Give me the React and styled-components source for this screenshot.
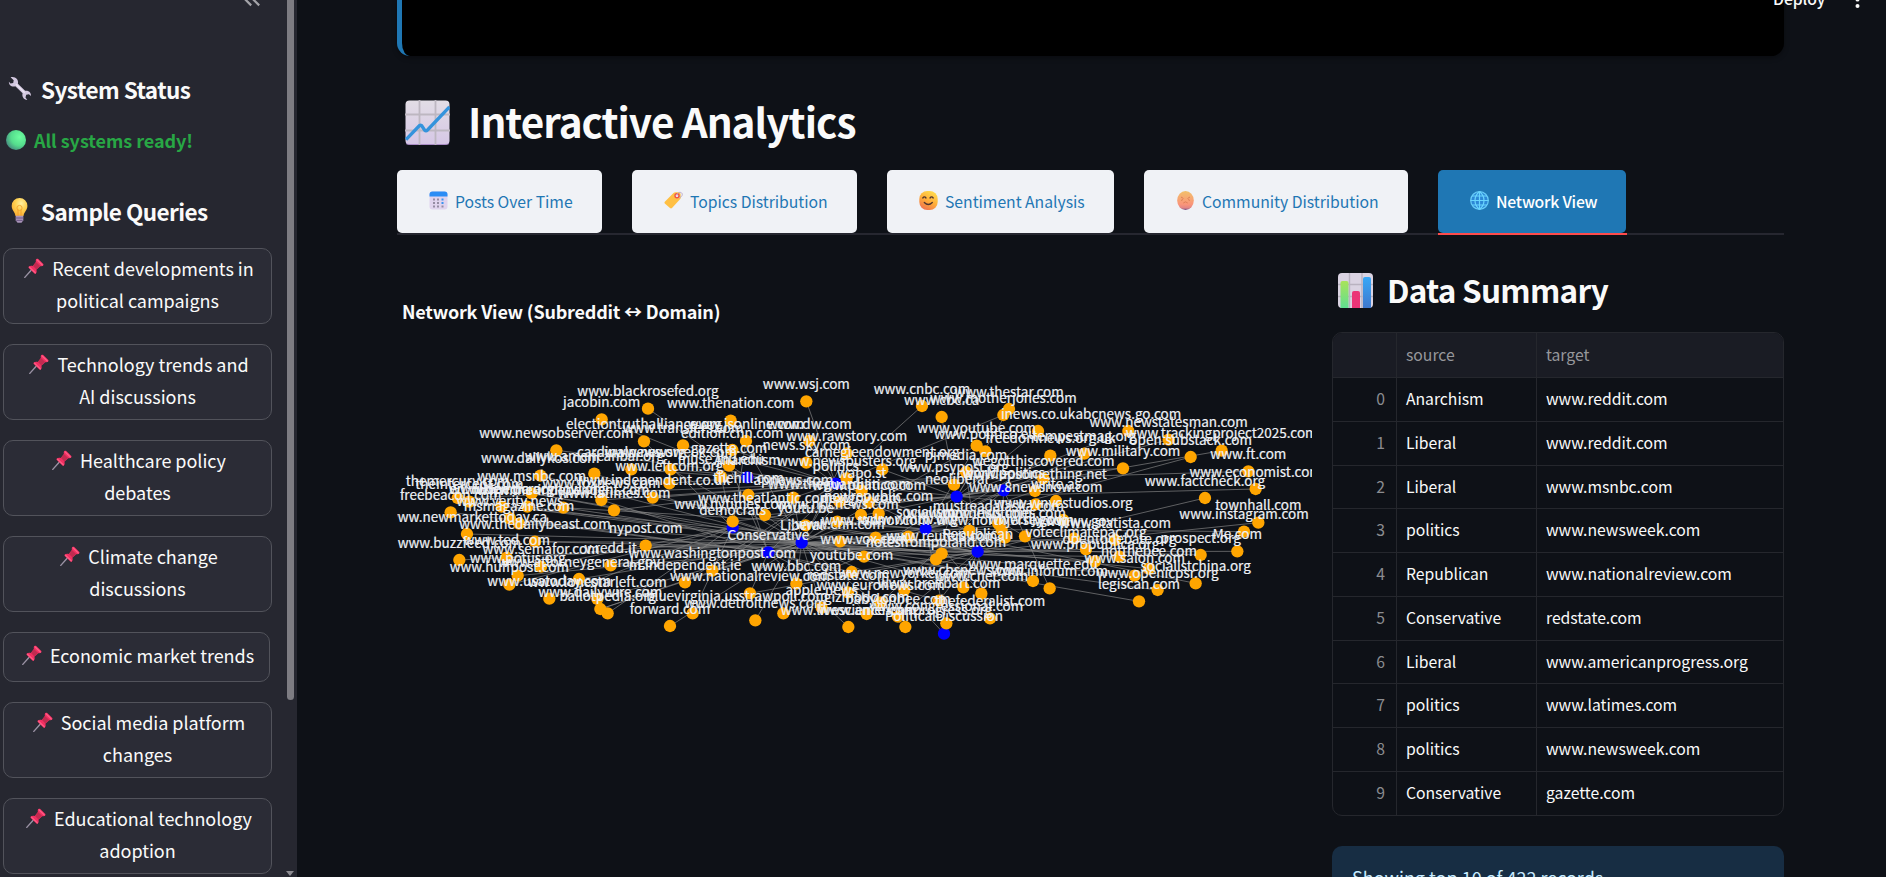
import React from "react";
import styled, { createGlobalStyle } from "styled-components";

const Global = createGlobalStyle`
  * { box-sizing: border-box; }
  body { margin: 0; background: #0e1117; color: #fafafa; overflow: hidden;
    font-family: "Noto Sans CJK SC", "Noto Sans", sans-serif; font-size: 18px; }
  h2, h3, p { margin: 0; }
`;

const Page = styled.div`display: flex; width: 1886px; height: 877px; overflow: hidden; position: relative;`;

/* ---------- sidebar ---------- */
const Sidebar = styled.aside`
  width: 297px; height: 877px; flex: none; background: #262730; display: flex; justify-content: space-between; overflow: hidden;
`;
const SideContent = styled.div`width: 273px; padding-left: 3px; display: flex; flex-direction: column; align-items: flex-start;`;
const CollapseRow = styled.div`width: 100%; height: 74px; flex: none; padding-left: 240px; svg { display: block; }`;
const SideHeading = styled.h3`
  display: flex; align-items: center; height: 30px; line-height: 30px; font-size: 22.5px; font-weight: 600; gap: 9px;
  letter-spacing: -0.55px; margin-top: ${(p) => p.$mt || 0}px; padding-left: 4px; white-space: nowrap;
  svg { flex: none; width: 25px; height: 25px; margin-top: -2px; }
`;
const Status = styled.p`
  display: flex; align-items: center; gap: 8px; height: 32px; line-height: 32px; margin-top: 20px; padding-left: 3px;
  color: #28a745; font-weight: 700; white-space: nowrap; letter-spacing: -0.05px;
  svg { width: 20px; height: 20px; }
`;
const Queries = styled.div`display: flex; flex-direction: column; align-items: flex-start; gap: 20px; margin-top: 22px;`;
const QueryButton = styled.button`
  font: inherit; line-height: 32px; color: #fafafa; background: #2b2c36; border: 1px solid #52535b; border-radius: 10px;
  width: ${(p) => p.$w}px; height: ${(p) => p.$h}px; padding: 3px 0 7px; text-align: center; white-space: pre-line; flex: none;
  display: flex; align-items: center; justify-content: center; letter-spacing: -0.03px;
  svg { width: 20px; height: 20px; margin: 0 8px 0 3px; vertical-align: -2px; }
`;
const ScrollTrack = styled.div`width: 10px; height: 877px; display: flex; flex-direction: column; justify-content: space-between; padding-bottom: 1px;`;
const ScrollThumb = styled.div`width: 7px; height: 700px; background: #7d7c82; border-radius: 0 0 4px 4px;`;
const ScrollArrow = styled.div`width: 0; height: 0; margin-left: -1px; border: 4.5px solid transparent; border-top: 5px solid #8c8b91; border-bottom: 0;`;

/* ---------- main ---------- */
const Main = styled.main`flex: 1; min-width: 0; padding-left: 100px; display: flex; flex-direction: column;`;
const Answer = styled.section`
  width: 1387px; height: 56px; flex: none; background: #000; border-left: 5px solid #1f77b4; border-radius: 0 0 13px 13px;
  box-shadow: 0 2px 5px rgba(0, 0, 0, 0.35);
`;
const TopMenu = styled.div`
  position: absolute; top: -13px; left: 1773px; display: flex; align-items: center; gap: 30px; height: 24px; line-height: 24px;
  font-size: 15.75px; font-weight: 500; color: #fafafa; letter-spacing: -0.1px;
  svg { display: block; margin-top: 2px; }
`;
const PageTitle = styled.h2`
  display: flex; align-items: center; gap: 18px; margin-top: 37px; padding-left: 8px; height: 56px; line-height: 56px;
  font-size: 40.5px; font-weight: 600; white-space: nowrap; letter-spacing: -0.98px;
  svg { width: 45px; height: 45px; flex: none; margin-top: 2px; }
`;
const Tabs = styled.div`
  display: flex; gap: 30px; width: 1387px; height: 65px; margin-top: 21px; border-bottom: 2px solid #262730;
`;
const Tab = styled.div`
  position: relative; width: ${(p) => p.$w}px; height: 63px; border-radius: 5px; padding: 0 0 1px 32px; display: flex; align-items: center; gap: 7px;
  background: ${(p) => (p.$active ? "#1f77b4" : "#f0f2f6")}; color: ${(p) => (p.$active ? "#fff" : "#1f77b4")};
  font-size: 15.75px; font-weight: ${(p) => (p.$active ? 500 : 400)}; letter-spacing: ${(p) => (p.$active ? -0.22 : -0.03)}px; white-space: nowrap;
  svg { width: 19px; height: 19px; flex: none; margin-top: -1px; }
`;
const ActiveLine = styled.span`position: absolute; left: 0; right: -1px; bottom: -2px; height: 2px; background: #ff4b4b;`;
const Columns = styled.div`display: flex; width: 1387px;`;
const ChartCol = styled.div`width: 935px; padding-top: 60px;`;
const ChartTitle = styled.div`padding-left: 5px; height: 32px; line-height: 32px; font-size: 18px; font-weight: 700; letter-spacing: -0.2px; white-space: nowrap;`;
const Plot = styled.svg`display: block; width: 915px; height: 290px; margin-top: 33px;`;
const Hub = styled.circle`fill: #0000ff;`;
const Site = styled.circle`fill: #ffa500;`;
const Edge = styled.line`stroke: #888888; stroke-width: 2;`;
const NodeLabel = styled.text`font-size: 40.5px; fill: #eef1f6; stroke: #eef1f6; stroke-width: 0.6; text-anchor: middle;`;

const DataCol = styled.div`width: 452px; padding-top: 33px;`;
const DataTitle = styled.h3`
  display: flex; align-items: center; gap: 14px; height: 44px; line-height: 44px; padding-left: 6px; font-size: 31.5px; font-weight: 600; white-space: nowrap;
  letter-spacing: -0.75px; margin-top: -1px;
  svg { width: 35px; height: 35px; flex: none; margin-top: 2px; }
`;
const Table = styled.div`
  margin-top: 21px; height: 484px; border: 1px solid #25272d; border-radius: 10px; overflow: hidden; font-size: 15.75px; letter-spacing: -0.03px;
`;
const Row = styled.div`
  display: grid; grid-template-columns: 64px 140px 1fr; height: ${(p) => (p.$head ? 45 : 43.75)}px;
  line-height: ${(p) => (p.$head ? 43 : 41)}px; border-bottom: 1px solid #25272d;
  background: ${(p) => (p.$head ? "#1a1c24" : "transparent")}; color: ${(p) => (p.$head ? "#96979b" : "#fafafa")};
  &:last-child { border-bottom: 0; }
`;
const Cell = styled.div`padding-left: 9px; border-right: 1px solid #25272d; white-space: nowrap; &:last-child { border-right: 0; }`;
const IndexCell = styled(Cell)`color: #8b8c90; text-align: right; padding: 0 11px 0 0;`;
const Info = styled.div`
  margin-top: 30px; height: 72px; border-radius: 10px; background: #172d43; color: #c7ebff; padding: 15px 20px; line-height: 32px; white-space: nowrap;
`;

/* ---------- icons ---------- */
const Pin = () => (
  <svg viewBox="0 0 20 20">
    <path d="M.8 19.4 7.6 11.8" stroke="#9b93a5" strokeWidth="1.4" strokeLinecap="round" />
    <path d="M4.8 8.6c1.2-1 2.8-1 4-.5l3.1-4.2c-.3-1.2-.2-2 .5-2.8.5-.5 1.300-.6 1.900 0l4.800 4.700c.6.6.5 1.300 0 1.800-.8.800-1.700.9-2.900.6l-3.800 3.500c.5 1.400.4 2.700-.6 3.900-.4.500-1 .4-1.400 0L4.800 10c-.5-.5-.5-1 0-1.400z" fill="#f22f62" />
    <path d="M11.900 3.900 9 7.900l3.200 3.300 4-3.300z" fill="#c22b50" />
    <path d="m13 1.800 5.300 5.200M5.500 9.200l5.800 5.600" stroke="#ff5d86" strokeWidth="1.200" strokeLinecap="round" />
  </svg>
);
const Wrench = () => (
  <svg viewBox="0 0 25 25">
    <path d="M3.600 1.300 6.700 4.300 6.200 6.900 3.500 7.400 1.900 5.800C1.700 9 4.600 11.300 8.300 10.300L15.600 17.300C14.600 20.800 16.800 23.800 20.300 23.900L18.500 21.600 19.200 18.800 21.900 18.300 24 20C24.300 16.500 21.500 14.100 18.100 14.800L10.900 7.800C11.900 3.900 8.500.2 3.600 1.300z" fill="#d3c8e0" />
    <path d="m9.300 8.500 8 7.800" stroke="#ece6f3" strokeWidth="1.300" strokeLinecap="round" />
  </svg>
);
const Bulb = () => (
  <svg viewBox="0 0 25 25">
    <defs><radialGradient id="bulb" cx=".6" cy=".3" r=".8"><stop offset="0" stopColor="#fff0a0" /><stop offset=".45" stopColor="#ffd152" /><stop offset="1" stopColor="#f8a72e" /></radialGradient></defs>
    <path d="M12.500 0a7.800 7.800 0 0 1 7.900 7.900c0 4.400-3.400 5.900-3.900 10.100h-8C8 13.800 4.700 12.300 4.700 7.900A7.800 7.800 0 0 1 12.500 0z" fill="url(#bulb)" />
    <path d="M11 18V11.500M14 18v-6.500" stroke="#f39a28" strokeWidth=".9" /><circle cx="12.500" cy="10" r="2.600" fill="none" stroke="#f5a833" />
    <path d="M8.700 17.800h7.600v4.500l-1.800 2.500h-4l-1.800-2.500z" fill="#a893b8" /><path d="M8.700 20h7.600M9.300 22.400h6.400" stroke="#6f5a86" />
  </svg>
);
const GreenDot = () => (
  <svg viewBox="0 0 20 20">
    <defs><radialGradient id="dot" cx=".68" cy=".35" r=".72"><stop offset="0" stopColor="#6dfda0" /><stop offset=".6" stopColor="#55dd8d" /><stop offset="1" stopColor="#478f80" /></radialGradient></defs>
    <circle cx="10" cy="10" r="10" fill="url(#dot)" />
  </svg>
);
const ChartUp = () => (
  <svg viewBox="0 0 45 45">
    <defs><linearGradient id="cu" x2="0" y2="1"><stop stopColor="#e2dde5" /><stop offset="1" stopColor="#d6c7e6" /></linearGradient></defs>
    <rect x=".5" y=".5" width="44" height="44" rx="4" fill="url(#cu)" /><path d="M1 43.500q1 1 4 1h35q3 0 4-1" stroke="#a98bc4" fill="none" />
    <path d="M14.500 0v45M30.500 0v45M0 14.500h45M0 30.500h45" stroke="#bdb7c1" strokeWidth="1.800" />
    <path d="m1 39.500 13.500-14q1-.8 2 0l3 4.500q1.500 1.500 3 0L44.500 7" fill="none" stroke="#3493dc" strokeWidth="3.300" />
  </svg>
);
const BarChart = () => (
  <svg viewBox="0 0 35 35">
    <defs><linearGradient id="g1" x2="0" y2="1"><stop stopColor="#a9e35a" /><stop offset="1" stopColor="#60df91" /></linearGradient>
      <linearGradient id="g2" x2="0" y2="1"><stop stopColor="#38a8f7" /><stop offset="1" stopColor="#3f78ce" /></linearGradient></defs>
    <rect width="35" height="35" rx="4" fill="#dad3e2" />
    <path d="M11.500 0v35M24 0v35M0 11.500h35M0 23.500h35" stroke="#b9b2c0" strokeWidth="1.400" />
    <path d="M2.500 35V10q0-2 2-2h4q2 0 2 2v25z" fill="url(#g1)" /><path d="M14 35V20q0-2 2-2h4q2 0 2 2v15z" fill="#eb3477" />
    <path d="M25 35V6q0-2 2-2h4q2 0 2 2v29z" fill="url(#g2)" />
  </svg>
);
const Calendar = () => (
  <svg viewBox="0 0 19 19">
    <rect x=".5" y=".5" width="18" height="18" rx="3" fill="#e0d4ee" /><path d="M.5 5.500v-2q0-3 3-3h12q3 0 3 3v2z" fill="#2b8df5" />
    <g fill="#958ca3">{[7.500, 11, 14.500].map((y) => [4, 8, 12.500].map((x) => <rect key={x + "-" + y} x={x} y={y} width="2" height="2" fill={x > 12 && y < 14 ? "#3a94f0" : undefined} />))}</g>
  </svg>
);
const Tag = () => (
  <svg viewBox="0 0 19 19">
    <path d="M.8 10.700 9.500 2q.8-.8 2-.8h3.200q1.600 0 1.800 1.600l.3 3.600q0 1-.8 1.800l-8 8.800q-1 .9-2 0L.8 12.500q-.8-.9 0-1.800z" fill="#ffc044" />
    <circle cx="13" cy="4.800" r="2" fill="#f2f0f6" stroke="#ef5548" strokeWidth="1.400" />
    <path d="M13 4.800C13 0 18.500.8 18.300 3.500c-.1 1.800-1.800 3-3.300 3.300" fill="none" stroke="#b9a7c7" strokeWidth=".9" />
  </svg>
);
const Smile = () => (
  <svg viewBox="0 0 19 19">
    <defs><linearGradient id="sm" x1=".8" x2=".3" y2="1"><stop stopColor="#ffe04f" /><stop offset=".55" stopColor="#ffac3a" /><stop offset="1" stopColor="#ef7350" /></linearGradient></defs>
    <rect x=".3" width="18.400" height="19" rx="8" fill="url(#sm)" />
    <path d="M3.800 7q1.600-2.200 3.200 0M11 7q1.600-2.200 3.200 0M5.300 11.500q4 4 8 0" fill="none" stroke="#50352f" strokeWidth="1.300" strokeLinecap="round" />
  </svg>
);
const Egg = () => (
  <svg viewBox="0 0 19 19">
    <defs><linearGradient id="eg" x2="0" y2="1"><stop stopColor="#f2c06a" /><stop offset=".7" stopColor="#fa9579" /><stop offset=".9" stopColor="#e08586" /><stop offset="1" stopColor="#67467f" /></linearGradient></defs>
    <ellipse cx="9.500" cy="9.500" rx="8.300" ry="9.500" fill="url(#eg)" />
    <path d="m5 6 2.500 1.500M5 9.500 7 8.500M14 6l-2.500 1.500M14 9.500l-2-1M7.300 12l2.200-1.200 2.200 1.200" fill="none" stroke="#d97c55" strokeWidth=".9" />
  </svg>
);
const Globe = () => (
  <svg viewBox="0 0 19 19" fill="none">
    <circle cx="9.500" cy="9.500" r="8.800" fill="#2c88d6" stroke="#69cdf9" strokeWidth="1.200" />
    <path d="M9.500.5v18M.5 9.500h18M2 5h15M2 14h15M9.500.5c-6 5-6 13 0 18M9.500.5c6 5 6 13 0 18" stroke="#69d4fd" strokeWidth="1.200" />
  </svg>
);

/* ---------- data ---------- */
const queries = [
  ["Recent developments in\npolitical campaigns", 269, 76],
  ["Technology trends and\nAI discussions", 269, 76],
  ["Healthcare policy\ndebates", 269, 76],
  ["Climate change\ndiscussions", 269, 76],
  ["Economic market trends", 267, 50],
  ["Social media platform\nchanges", 269, 76],
  ["Educational technology\nadoption", 269, 76],
];
const tabs = [
  ["Posts Over Time", 205, Calendar],
  ["Topics Distribution", 225, Tag],
  ["Sentiment Analysis", 227, Smile],
  ["Community Distribution", 264, Egg],
  ["Network View", 188, Globe],
];
const rows = [
  ["Anarchism", "www.reddit.com"], ["Liberal", "www.reddit.com"], ["Liberal", "www.msnbc.com"], ["politics", "www.newsweek.com"],
  ["Republican", "www.nationalreview.com"], ["Conservative", "redstate.com"], ["Liberal", "www.americanprogress.org"],
  ["politics", "www.latimes.com"], ["politics", "www.newsweek.com"], ["Conservative", "gazette.com"],
];

const hubs = {
  A: ["Anarchism", 1072, 352], P: ["politics", 1337, 371], N: ["neoliberal", 1700, 410], D: ["democrats", 1028, 502],
  L: ["Liberal", 1235, 548], C: ["Conservative", 1135, 577], S: ["socialism", 1607, 507], R: ["Republican", 1763, 575],
  Q: ["PoliticalDiscussion", 1662, 821], W: ["worldpolitics", 1841, 391],
};
/* label, x, y, linked subreddits */
const sites = [
  ["www.blackrosefed.org", 774, 146, "A"], ["jacobin.com", 635, 178, "A"], ["www.newsobserver.com", 499, 271, "P"],
  ["electiontruthalliance.org", 762, 244, "D"], ["www.transfers.com", 879, 256, "P"], ["www.dailykos.com", 451, 347, "L"],
  ["www.americanbar.org", 613, 341, "L"], ["cardinalnews.org", 724, 328, "P"], ["www.newsweek.com", 842, 328, "PL"],
  ["www.leftcom.org", 838, 370, "A"], ["www.msnbc.com", 425, 400, "LD"], ["themercury.com", 203, 414, "P"],
  ["theintercept.com", 238, 425, "L"], ["www.foxnews.com", 634, 420, "CP"], ["www.independent.co.uk", 788, 413, "PR"],
  ["www.latimes.com", 672, 451, "P"], ["freebeacon.com", 182, 457, "C"], ["www.the-independent.com", 520, 443, "LS"],
  ["www.democracynow.org", 412, 440, "L"], ["en.wikipedia.org", 335, 440, "R"], ["www.verity.news", 360, 475, "C"],
  ["msmagazine.com", 387, 491, "L"], ["www.newmarkettoday.ca", 231, 522, "L"], ["www.thedailybeast.com", 435, 545, "LR"],
  ["nypost.com", 767, 557, "CR"], ["www.buzzfeed.com", 208, 600, "L"], ["www.ted.com", 350, 593, "S"],
  ["www.semafor.com", 453, 620, "D"], ["v.redd.it", 662, 616, "LN"], ["www.potus.org", 383, 647, "C"],
  ["www.attorneygeneral.gov", 567, 657, "L"], ["www.huffpost.com", 358, 674, "D"], ["www.usatoday.com", 478, 716, "D"],
  ["www.lonestarleft.com", 622, 717, "L"], ["www.dailywire.com", 631, 747, "CL"], ["ballotpedia.org", 653, 760, "D"],
  ["forward.com", 840, 798, "L"], ["m.independent.ie", 885, 667, "P"], ["bluevirginia.us", 908, 760, "D"],
  ["www.washingtonpost.com", 967, 632, "LP"], ["www.nationalreview.com", 1080, 700, "CR"], ["www.wsj.com", 1249, 124, "P"],
  ["www.cnbc.com", 1596, 138, "P"], ["www.cbc.ca", 1655, 171, "N"], ["www.thenation.com", 1022, 182, "L"],
  ["www.jsonline.com", 1068, 243, "D"], ["www.dw.com", 1258, 243, "P"], ["edition.cnn.com", 1027, 270, "P"],
  ["www.rawstory.com", 1370, 280, "L"], ["gazette.com", 1017, 317, "C"], ["news.sky.com", 1249, 308, "P"],
  ["carnegieendowment.org", 1477, 328, "N"], ["www.youtube.com", 1760, 257, "SL"], ["www.politico.eu", 1786, 274, "N"],
  ["muse.jhu.edu", 993, 350, "D"], ["www.newsbusters.org", 1370, 355, "C"], ["www.psypost.org", 1692, 374, "P"],
  ["thehill.com", 1075, 405, "PC"], ["apnews.com", 1210, 413, "PL"], ["wapo.st", 1415, 392, "P"],
  ["www.theguardian.com", 1348, 425, "LN"], ["www.politico.com", 1437, 427, "PR"], ["pjmedia.com", 1728, 336, "R"],
  ["www.theatlantic.com", 1125, 465, "LN"], ["www.nytimes.com", 1028, 484, "LW"], ["newrepublic.com", 1466, 461, "L"],
  ["nextgov.com", 1413, 465, "P"], ["youtu.be", 1247, 496, "R"], ["www.nbcnews.com", 1342, 485, "LS"], ["www.cnn.com", 1350, 544, "CS"],
  ["www.radnor.com", 1457, 533, "R"], ["www.wmtw.org", 1555, 530, "W"], ["mustreadalaska.com", 1825, 491, "R"],
  ["www.mprnews.com", 1738, 512, "P"], ["www.vox.com", 1422, 590, "NL"], ["www.reuters.com", 1655, 581, "LD"],
  ["notesfrompoland.com", 1638, 598, "N"], ["youtube.com", 1385, 636, "CR"], ["www.bbc.com", 1219, 671, "SL"],
  ["www.newyorker.com", 1543, 690, "L"], ["www.cbsnews.com", 1720, 682, "LR"], ["redstate.com", 1374, 697, "C"],
  ["www.euronews.com", 1472, 727, "W"], ["www.breitbart.com", 1647, 722, "CR"], ["www.cnet.com", 1774, 701, "S"],
  ["www.detroitnews.com", 1096, 781, "P"], ["strawpoll.com", 1180, 760, "R"], ["apple.news", 1295, 743, "L"],
  ["gizmodo.com", 1430, 762, "L"], ["babylonbee.com", 1524, 770, "R"], ["www.livescience.com", 1375, 801, "C"],
  ["www.americanprogress.org", 1546, 801, "L"], ["www.congressional.com", 1669, 790, "S"], ["thefederalist.com", 1800, 775, "R"],
  ["www.thestar.com", 1857, 147, "N"], ["www.motherjones.com", 1840, 165, "P"], ["inews.co.uk", 1944, 213, "N"],
  ["abcnews.go.com", 2215, 213, "N"], ["www.newstatesman.com", 2336, 239, "N"], ["www.trackingproject2025.com", 2495, 272, "N"],
  ["open.substack.com", 2402, 291, "S"], ["tempestmag.org", 2083, 281, "S"], ["freedomnews.org.uk", 1981, 287, "S"],
  ["www.military.com", 2199, 325, "P"], ["wegotthiscovered.com", 1960, 355, "N"], ["www.ft.com", 2575, 334, "P"],
  ["www.economist.com", 2597, 387, "N"], ["www.factcheck.org", 2445, 414, "R"], ["www.upsomething.net", 1935, 393, "S"],
  ["write.as", 1998, 423, "S"], ["www.8newsnow.com", 1937, 433, "P"], ["www.wnycstudios.org", 2020, 480, "L"],
  ["www.irishtimes.com", 1835, 510, "W"], ["www.northjersey.com", 1845, 533, "L"], ["www.nj.gov", 1905, 529, "N"],
  ["www.wv.gov", 2052, 535, "C"], ["www.statista.com", 2175, 540, "L"], ["voteclimatepac.org", 2088, 568, "R"],
  ["townhall.com", 2605, 488, "R"], ["www.instagram.com", 2562, 515, "S"], ["opentodebate.org", 2188, 590, "C"],
  ["prospect.org", 2432, 585, "L"], ["Me.com", 2542, 574, "R"], ["www.propublica.org", 2115, 604, "L"],
  ["notthebee.com", 2277, 626, "R"], ["www.salon.com", 2234, 647, "L"], ["socialistchina.org", 2417, 670, "S"],
  ["www.openicpsr.org", 2303, 690, "L"], ["legiscan.com", 2247, 724, "L"], ["www.marquette.edu", 1929, 663, "L"],
  ["www.inforum.com", 1979, 685, "W"],
];

function Network() {
  return (
    <Plot viewBox="21 0 2745 870">
      {sites.flatMap(([name, x, y, links]) =>
        [...links].map((k) => <Edge key={name + k} x1={x} y1={y} x2={hubs[k][1]} y2={hubs[k][2]} />)
      )}
      <Edge x1={1575} y1={727} x2={hubs.Q[1]} y2={hubs.Q[2]} />
      {Object.values(hubs).map(([name, x, y]) => <Hub key={name} cx={x} cy={y} r="18.500" />)}
      {sites.map(([name, x, y]) => <Site key={name} cx={x} cy={y} r="18.500" />)}
      {[...Object.values(hubs), ...sites].map(([name, x, y]) => <NodeLabel key={name} x={x} y={y - 37}>{name}</NodeLabel>)}
    </Plot>
  );
}

export default function App() {
  return (
    <Page>
      <Global />
      <Sidebar>
        <SideContent>
          <CollapseRow>
            <svg width="20" height="8" viewBox="0 0 20 8" fill="none" stroke="#a3a3a8" strokeWidth="2.200"><path d="M8.200 5.400 .2 -2.600M16.200 5.400 8.200 -2.600" /></svg>
          </CollapseRow>
          <SideHeading><Wrench />System Status</SideHeading>
          <Status><GreenDot />All systems ready!</Status>
          <SideHeading $mt={40}><Bulb />Sample Queries</SideHeading>
          <Queries>
            {queries.map(([text, w, h]) => <QueryButton key={text} $w={w} $h={h}><span><Pin />{text}</span></QueryButton>)}
          </Queries>
        </SideContent>
        <ScrollTrack><ScrollThumb /><ScrollArrow /></ScrollTrack>
      </Sidebar>
      <Main>
        <Answer />
        <PageTitle><ChartUp />Interactive Analytics</PageTitle>
        <Tabs>
          {tabs.map(([text, w, Icon], i) => (
            <Tab key={text} $w={w} $active={i === 4}><Icon />{text}{i === 4 && <ActiveLine />}</Tab>
          ))}
        </Tabs>
        <Columns>
          <ChartCol>
            <ChartTitle>Network View (Subreddit ↔ Domain)</ChartTitle>
            <Network />
          </ChartCol>
          <DataCol>
            <DataTitle><BarChart />Data Summary</DataTitle>
            <Table>
              <Row $head><Cell /><Cell>source</Cell><Cell>target</Cell></Row>
              {rows.map(([s, t], i) => <Row key={i}><IndexCell>{i}</IndexCell><Cell>{s}</Cell><Cell>{t}</Cell></Row>)}
            </Table>
            <Info>Showing top 10 of 422 records</Info>
          </DataCol>
        </Columns>
      </Main>
      <TopMenu>Deploy<svg width="5" height="20" viewBox="0 0 5 20" fill="#fafafa"><circle cx="2.500" cy="3" r="2" /><circle cx="2.500" cy="9.500" r="2" /><circle cx="2.500" cy="16" r="2" /></svg></TopMenu>
    </Page>
  );
}
